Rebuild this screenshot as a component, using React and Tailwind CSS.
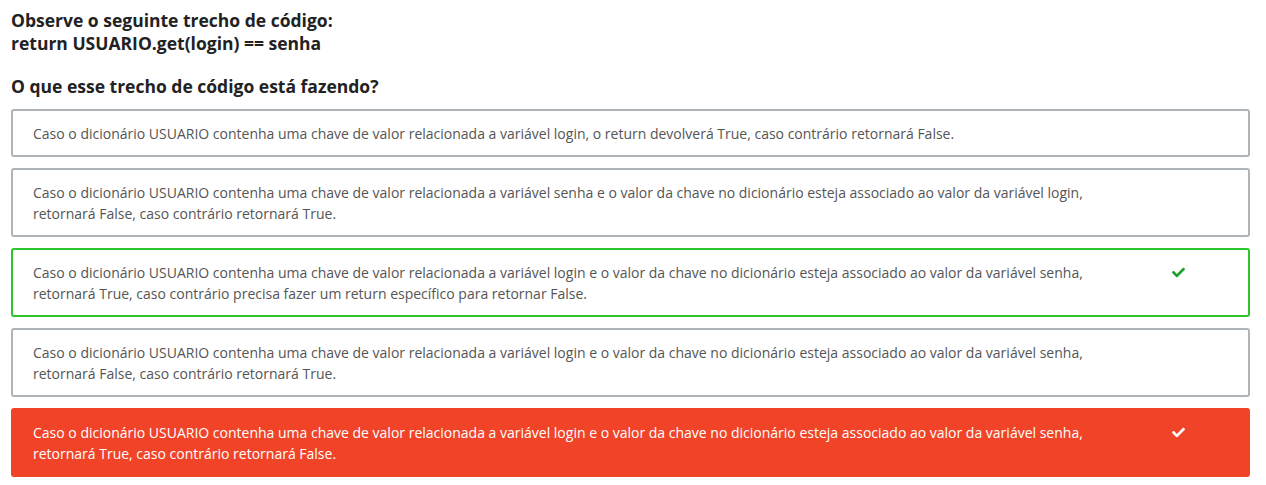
import React from 'react';

const options = [
  {
    text: 'Caso o dicionário USUARIO contenha uma chave de valor relacionada a variável login, o return devolverá True, caso contrário retornará False.',
    state: 'idle',
  },
  {
    text: 'Caso o dicionário USUARIO contenha uma chave de valor relacionada a variável senha e o valor da chave no dicionário esteja associado ao valor da variável login, retornará False, caso contrário retornará True.',
    state: 'idle',
  },
  {
    text: 'Caso o dicionário USUARIO contenha uma chave de valor relacionada a variável login e o valor da chave no dicionário esteja associado ao valor da variável senha, retornará True, caso contrário precisa fazer um return específico para retornar False.',
    state: 'correct',
  },
  {
    text: 'Caso o dicionário USUARIO contenha uma chave de valor relacionada a variável login e o valor da chave no dicionário esteja associado ao valor da variável senha, retornará False, caso contrário retornará True.',
    state: 'idle',
  },
  {
    text: 'Caso o dicionário USUARIO contenha uma chave de valor relacionada a variável login e o valor da chave no dicionário esteja associado ao valor da variável senha, retornará True, caso contrário retornará False.',
    state: 'wrong',
  },
];

const boxStyles = {
  idle: 'bg-white border-[#aeb4b8] text-[#555]',
  correct: 'bg-white border-[#2cc52c] text-[#555]',
  wrong: 'bg-[#f04328] border-[#f04328] text-white',
};

function Check({ className }) {
  return (
    <svg viewBox="0 0 512 512" className={className} fill="currentColor">
      <path d="M173.9 439.4 7.5 273c-10-10-10-26.2 0-36.2l36.2-36.2c10-10 26.2-10 36.2 0L192 312.7 432.1 72.6c10-10 26.2-10 36.2 0l36.2 36.2c10 10 10 26.2 0 36.2L210.1 439.4c-10 10-26.2 10-36.2 0z" />
    </svg>
  );
}

export default function App() {
  return (
    <div className="pl-[11px] pr-[16px] pt-[9px] font-['Open_Sans',sans-serif] bg-white min-h-screen">
      <h2 className="text-[17.5px] leading-[23px] font-bold text-[#222]">
        Observe o seguinte trecho de código:<br />return USUARIO.get(login) == senha
      </h2>
      <h3 className="mt-[20px] text-[17.5px] leading-[23px] font-bold text-[#222]">O que esse trecho de código está fazendo?</h3>

      <div className="mt-[11px] flex flex-col gap-[11px]">
        {options.map((o, i) => (
          <div key={i} className={`flex items-start border-2 rounded-[3px] pl-[20px] pr-[20px] pt-[12px] pb-[11px] ${boxStyles[o.state]}`}>
            <p className={`flex-1 text-[14px] leading-[21px] ${o.state === 'wrong' ? 'font-medium' : ''}`}>{o.text}</p>
            <div className="w-[100px] h-[21px] flex items-center justify-center">
              {o.state === 'correct' && <Check className="w-[13px] h-[13px] text-[#1e9e2c]" />}
              {o.state === 'wrong' && <Check className="w-[13px] h-[13px] text-white" />}
            </div>
          </div>
        ))}
      </div>
    </div>
  );
}
